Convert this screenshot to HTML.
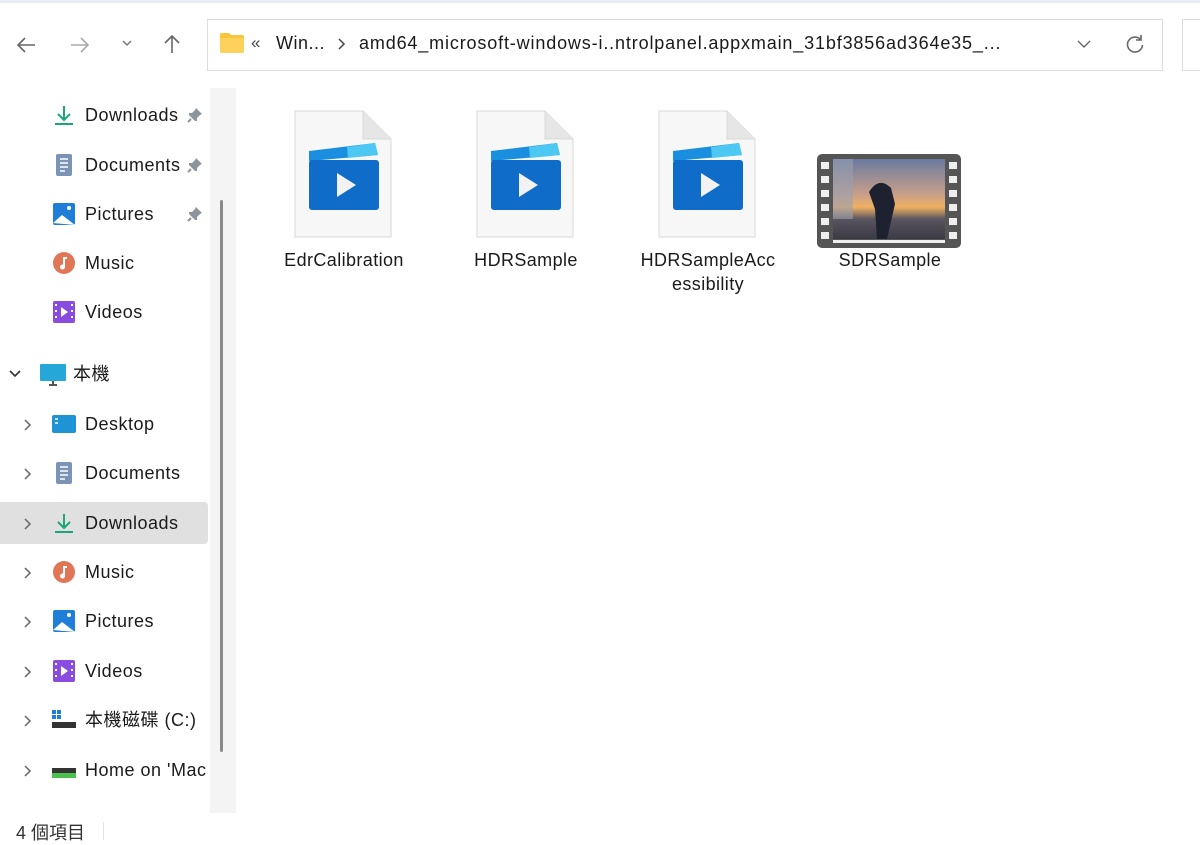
<!DOCTYPE html>
<html><head><meta charset="utf-8"><style>
*{margin:0;padding:0;box-sizing:border-box}
body{width:1200px;height:843px;overflow:hidden;background:#fff;font-family:"Liberation Sans","Noto Sans CJK TC",sans-serif;color:#1a1a1a;position:relative}
.abs{position:absolute}
.topline{left:0;top:0;width:1200px;height:3px;background:#e8ecf2}
.addr{left:207px;top:19px;width:956px;height:52px;border:1px solid #dcdcdc;background:#fff}
.addr2{left:1182px;top:19px;width:30px;height:52px;border:1px solid #dcdcdc}
.side{left:0;top:88px;width:210px;height:725px}
.track{left:210px;top:88px;width:26px;height:725px;background:#f4f4f4}
.thumb{left:220px;top:200px;width:3px;height:552px;background:#8a8a8a;border-radius:2px}
.row{position:absolute;left:0;width:208px;height:42px;font-size:18px;line-height:42px;letter-spacing:0.5px}
.row .t{position:absolute;left:85px}
.row .ic{position:absolute;left:52px;top:10px;width:24px;height:22px}
.row .chev{position:absolute;left:22px;top:15px;width:12px;height:14px}
.pin{position:absolute;left:186px;top:12px;width:18px;height:18px}
.sel{background:#e0e0e0;border-radius:0 4px 4px 0}
.file{position:absolute;top:110px;width:98px;height:128px}
.lbl{position:absolute;font-size:18px;text-align:center;width:160px;line-height:24px;letter-spacing:0.4px}
.status{left:16px;top:819px;font-size:18px;color:#333}
</style></head><body>
<svg width="0" height="0" style="position:absolute"><defs>
<symbol id="pin" viewBox="0 0 18 18"><path d="M10 2l6 6-2 1-3 3 0 3-2 0-6-6 0-2 3 0 3-3z" fill="#8d959c"/><path d="M5 13l-3 3" stroke="#8d959c" stroke-width="2"/></symbol>
<symbol id="chev" viewBox="0 0 12 14"><path d="M3 2l5 5-5 5" stroke="#666" stroke-width="1.5" fill="none"/></symbol>
</defs></svg>
<div class="abs topline"></div>
<svg class="abs" style="left:14px;top:34px" width="24" height="22" viewBox="0 0 24 22"><path d="M21 11H4M11 4l-7 7 7 7" stroke="#666" stroke-width="1.6" fill="none"/></svg>
<svg class="abs" style="left:68px;top:34px" width="24" height="22" viewBox="0 0 24 22"><path d="M3 11h17M13 4l7 7-7 7" stroke="#aaa" stroke-width="1.6" fill="none"/></svg>
<svg class="abs" style="left:120px;top:38px" width="14" height="10" viewBox="0 0 14 10"><path d="M3 3l4 4 4-4" stroke="#777" stroke-width="1.5" fill="none"/></svg>
<svg class="abs" style="left:160px;top:32px" width="24" height="24" viewBox="0 0 24 24"><path d="M12 21V4M5 11l7-7 7 7" stroke="#666" stroke-width="1.6" fill="none"/></svg>
<div class="abs addr"></div>
<svg class="abs" style="left:219px;top:32px" width="26" height="22" viewBox="0 0 26 22"><path d="M1 3q0-2 2-2h7l2 2h11q2 0 2 2v14q0 2-2 2H3q-2 0-2-2z" fill="#f8c53a"/><rect x="1" y="6" width="24" height="15" rx="2" fill="#fcd25a"/></svg>
<div class="abs" style="left:251px;top:33px;font-size:17px;color:#444">«</div>
<div class="abs" style="left:276px;top:33px;font-size:18px;letter-spacing:0.5px">Win...</div>
<svg class="abs" style="left:336px;top:37px" width="12" height="14" viewBox="0 0 12 14"><path d="M3 2l5 5-5 5" stroke="#444" stroke-width="1.5" fill="none"/></svg>
<div class="abs" style="left:359px;top:33px;font-size:18px;letter-spacing:0.85px;white-space:nowrap">amd64_microsoft-windows-i..ntrolpanel.appxmain_31bf3856ad364e35_...</div>
<svg class="abs" style="left:1076px;top:38px" width="16" height="12" viewBox="0 0 16 12"><path d="M2 3l6 6 6-6" stroke="#666" stroke-width="1.4" fill="none"/></svg>
<svg class="abs" style="left:1124px;top:33px" width="22" height="22" viewBox="0 0 22 22"><path d="M17 7A7.5 7.5 0 1 0 18.5 12" stroke="#666" stroke-width="1.6" fill="none"/><path d="M17 2v5h-5" stroke="#666" stroke-width="1.6" fill="none"/></svg>
<div class="abs addr2"></div>

<div class="abs track"></div>
<div class="abs thumb"></div>

<div class="abs side">
 <div class="row" style="top:6px"><svg class="ic" viewBox="0 0 24 22"><path d="M12 2v13M6 10l6 6 6-6" stroke="#1aa57a" stroke-width="2" fill="none"/><path d="M3 20h18" stroke="#1aa57a" stroke-width="2"/></svg><span class="t">Downloads</span><svg class="pin"><use href="#pin"/></svg></div>
 <div class="row" style="top:56px"><svg class="ic" viewBox="0 0 24 22"><rect x="4" y="0" width="16" height="22" rx="2" fill="#7b93b4"/><path d="M8 5h8M8 9h8M8 13h8M8 17h5" stroke="#fff" stroke-width="1.5"/></svg><span class="t">Documents</span><svg class="pin"><use href="#pin"/></svg></div>
 <div class="row" style="top:105px"><svg class="ic" viewBox="0 0 24 22"><rect x="1" y="0" width="22" height="22" rx="2" fill="#1f7fd8"/><path d="M1 20l9-8 13 10z" fill="#fff"/><circle cx="17" cy="5" r="2" fill="#fff"/></svg><span class="t">Pictures</span><svg class="pin"><use href="#pin"/></svg></div>
 <div class="row" style="top:154px"><svg class="ic" viewBox="0 0 24 22"><circle cx="12" cy="11" r="11" fill="#e07656"/><path d="M11 5h4v2h-2v8a2.5 2.5 0 1 1-2-2.4z" fill="#fff"/></svg><span class="t">Music</span></div>
 <div class="row" style="top:203px"><svg class="ic" viewBox="0 0 24 22"><rect x="1" y="0" width="22" height="22" rx="2" fill="#8a4be0"/><path d="M9 6v10l7-5z" fill="#fff"/><path d="M4 3v2M4 9v2M4 15v2M20 3v2M20 9v2M20 15v2" stroke="#fff" stroke-width="2"/></svg><span class="t">Videos</span></div>
 <div class="row" style="top:265px"><svg style="position:absolute;left:8px;top:16px" width="14" height="10" viewBox="0 0 14 10"><path d="M2 2l5 5 5-5" stroke="#333" stroke-width="1.6" fill="none"/></svg><svg style="position:absolute;left:40px;top:10px;width:26px;height:24px" viewBox="0 0 26 24"><rect x="0" y="1" width="26" height="17" rx="1" fill="#25a8d8"/><path d="M9 22h8M13 18v4" stroke="#555" stroke-width="2"/></svg><span class="t" style="left:73px">本機</span></div>
 <div class="row" style="top:315px"><svg class="chev"><use href="#chev"/></svg><svg class="ic" viewBox="0 0 24 22"><rect x="0" y="2" width="24" height="18" rx="2" fill="#1e94d6"/><path d="M3 6h3M3 10h3" stroke="#fff" stroke-width="1.6"/></svg><span class="t">Desktop</span></div>
 <div class="row" style="top:364px"><svg class="chev"><use href="#chev"/></svg><svg class="ic" viewBox="0 0 24 22"><rect x="4" y="0" width="16" height="22" rx="2" fill="#7b93b4"/><path d="M8 5h8M8 9h8M8 13h8M8 17h5" stroke="#fff" stroke-width="1.5"/></svg><span class="t">Documents</span></div>
 <div class="row sel" style="top:414px"><svg class="chev"><use href="#chev"/></svg><svg class="ic" viewBox="0 0 24 22"><path d="M12 2v13M6 10l6 6 6-6" stroke="#1aa57a" stroke-width="2" fill="none"/><path d="M3 20h18" stroke="#1aa57a" stroke-width="2"/></svg><span class="t">Downloads</span></div>
 <div class="row" style="top:463px"><svg class="chev"><use href="#chev"/></svg><svg class="ic" viewBox="0 0 24 22"><circle cx="12" cy="11" r="11" fill="#e07656"/><path d="M11 5h4v2h-2v8a2.5 2.5 0 1 1-2-2.4z" fill="#fff"/></svg><span class="t">Music</span></div>
 <div class="row" style="top:512px"><svg class="chev"><use href="#chev"/></svg><svg class="ic" viewBox="0 0 24 22"><rect x="1" y="0" width="22" height="22" rx="2" fill="#1f7fd8"/><path d="M1 20l9-8 13 10z" fill="#fff"/><circle cx="17" cy="5" r="2" fill="#fff"/></svg><span class="t">Pictures</span></div>
 <div class="row" style="top:562px"><svg class="chev"><use href="#chev"/></svg><svg class="ic" viewBox="0 0 24 22"><rect x="1" y="0" width="22" height="22" rx="2" fill="#8a4be0"/><path d="M9 6v10l7-5z" fill="#fff"/><path d="M4 3v2M4 9v2M4 15v2M20 3v2M20 9v2M20 15v2" stroke="#fff" stroke-width="2"/></svg><span class="t">Videos</span></div>
 <div class="row" style="top:611px"><svg class="chev"><use href="#chev"/></svg><svg class="ic" viewBox="0 0 24 22"><rect x="0" y="1" width="4" height="4" fill="#1e7fd6"/><rect x="5" y="1" width="4" height="4" fill="#1e7fd6"/><rect x="0" y="6" width="4" height="4" fill="#1e7fd6"/><rect x="5" y="6" width="4" height="4" fill="#1e7fd6"/><rect x="0" y="13" width="24" height="6" fill="#333"/></svg><span class="t">本機磁碟 (C:)</span></div>
 <div class="row" style="top:661px"><svg class="chev"><use href="#chev"/></svg><svg class="ic" viewBox="0 0 24 22"><rect x="0" y="9" width="24" height="5" fill="#333"/><rect x="0" y="14" width="24" height="5" fill="#4cc04c"/></svg><span class="t" style="width:124px;overflow:hidden;white-space:nowrap">Home on 'Mac</span></div>
</div>

<svg class="file" style="left:294px" viewBox="0 0 98 128"><path d="M1 1h68l28 28v98H1z" fill="#f7f7f7" stroke="#d8d8d8"/><path d="M69 1v28h28" fill="#e6e6e6" stroke="#d8d8d8"/><g transform="translate(13,33)"><path d="M2 8L68 0l3 12-69 6z" fill="#1a8fe0"/><path d="M40 4l28-4 3 12-30 3z" fill="#4cc8f2"/><rect x="2" y="17" width="70" height="50" rx="3" fill="#0f6cc8"/><path d="M30 30v24l19-12z" fill="#f2f2f2"/></g></svg>
<svg class="file" style="left:476px" viewBox="0 0 98 128"><path d="M1 1h68l28 28v98H1z" fill="#f7f7f7" stroke="#d8d8d8"/><path d="M69 1v28h28" fill="#e6e6e6" stroke="#d8d8d8"/><g transform="translate(13,33)"><path d="M2 8L68 0l3 12-69 6z" fill="#1a8fe0"/><path d="M40 4l28-4 3 12-30 3z" fill="#4cc8f2"/><rect x="2" y="17" width="70" height="50" rx="3" fill="#0f6cc8"/><path d="M30 30v24l19-12z" fill="#f2f2f2"/></g></svg>
<svg class="file" style="left:658px" viewBox="0 0 98 128"><path d="M1 1h68l28 28v98H1z" fill="#f7f7f7" stroke="#d8d8d8"/><path d="M69 1v28h28" fill="#e6e6e6" stroke="#d8d8d8"/><g transform="translate(13,33)"><path d="M2 8L68 0l3 12-69 6z" fill="#1a8fe0"/><path d="M40 4l28-4 3 12-30 3z" fill="#4cc8f2"/><rect x="2" y="17" width="70" height="50" rx="3" fill="#0f6cc8"/><path d="M30 30v24l19-12z" fill="#f2f2f2"/></g></svg>
<svg class="abs" style="left:817px;top:154px" width="144" height="94" viewBox="0 0 144 94">
<defs><linearGradient id="sky" x1="0" y1="0" x2="0" y2="1"><stop offset="0" stop-color="#6a7aa0"/><stop offset="0.45" stop-color="#c9a088"/><stop offset="0.6" stop-color="#f0b060"/><stop offset="0.75" stop-color="#5a5560"/><stop offset="1" stop-color="#3a3a45"/></linearGradient></defs>
<rect x="0" y="0" width="144" height="94" rx="5" fill="#555"/>
<rect x="16" y="5" width="112" height="80" fill="url(#sky)"/>
<rect x="16" y="5" width="20" height="60" fill="#9aa0b0" opacity=".6"/>
<path d="M52 38q10-16 22-4l4 16-8 35h-10l-2-30z" fill="#1e2230"/>
<rect x="16" y="86" width="112" height="3" fill="#eee"/>
<g fill="#eee"><rect x="4" y="8" width="8" height="7"/><rect x="4" y="22" width="8" height="7"/><rect x="4" y="36" width="8" height="7"/><rect x="4" y="50" width="8" height="7"/><rect x="4" y="64" width="8" height="7"/><rect x="4" y="78" width="8" height="7"/><rect x="132" y="8" width="8" height="7"/><rect x="132" y="22" width="8" height="7"/><rect x="132" y="36" width="8" height="7"/><rect x="132" y="50" width="8" height="7"/><rect x="132" y="64" width="8" height="7"/><rect x="132" y="78" width="8" height="7"/></g></svg>
<div class="lbl" style="left:264px;top:248px">EdrCalibration</div>
<div class="lbl" style="left:446px;top:248px">HDRSample</div>
<div class="lbl" style="left:628px;top:248px">HDRSampleAcc<br>essibility</div>
<div class="lbl" style="left:810px;top:248px">SDRSample</div>

<div class="abs status">4 個項目</div>
<div class="abs" style="left:103px;top:822px;width:1px;height:18px;background:#e4e4e4"></div>
</body></html>
